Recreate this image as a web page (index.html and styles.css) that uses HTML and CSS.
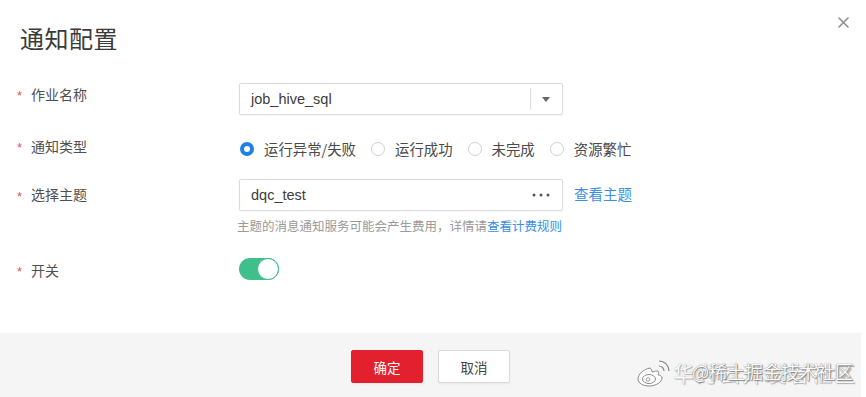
FILE: index.html
```html
<!DOCTYPE html>
<html lang="zh">
<head>
<meta charset="utf-8">
<title>通知配置</title>
<link rel="stylesheet" href="styles.css">
</head>
<body>
<div class="dialog">
  <div class="header">
    <h1 class="title">通知配置</h1>
    <button class="close" aria-label="关闭">
      <svg width="11" height="11" viewBox="0 0 11 11"><path d="M1 1L10 10M10 1L1 10" stroke="#8f8f8f" stroke-width="1.6" stroke-linecap="round"/></svg>
    </button>
  </div>

  <div class="form">
    <div class="row row-job">
      <div class="label label-up"><span class="star">*</span>作业名称</div>
      <div class="control">
        <div class="field select">
          <span class="value">job_hive_sql</span>
          <span class="divider"></span>
          <span class="caret"></span>
        </div>
      </div>
    </div>

    <div class="row row-type">
      <div class="label label-up-s"><span class="star">*</span>通知类型</div>
      <div class="control radios">
        <label class="radio"><span class="dot checked"></span>运行异常/失败</label>
        <label class="radio"><span class="dot"></span>运行成功</label>
        <label class="radio"><span class="dot"></span>未完成</label>
        <label class="radio"><span class="dot"></span>资源繁忙</label>
      </div>
    </div>

    <div class="row row-topic">
      <div class="label"><span class="star">*</span>选择主题</div>
      <div class="control topic">
        <div class="field input">
          <span class="value">dqc_test</span>
          <svg class="more" width="18" height="4" viewBox="0 0 18 4">
            <circle cx="2" cy="2" r="1.5" fill="#555"/>
            <circle cx="9" cy="2" r="1.5" fill="#555"/>
            <circle cx="16" cy="2" r="1.5" fill="#555"/>
          </svg>
        </div>
        <a class="link view">查看主题</a>
      </div>
    </div>
    <div class="help">主题的消息通知服务可能会产生费用，详情请<a class="link">查看计费规则</a></div>

    <div class="row row-switch">
      <div class="label label-down"><span class="star">*</span>开关</div>
      <div class="control">
        <span class="switch"><span class="knob"></span></span>
      </div>
    </div>
  </div>

  <div class="footer">
    <button class="btn primary">确定</button>
    <button class="btn">取消</button>
  </div>

  <div class="watermark">
    <svg class="weibo" width="36" height="28" viewBox="0 0 36 28">
      <path d="M14 9c-6 1-12 6-12 11 0 4 5 7 11 7 7 0 13-4 13-8 0-2-2-3-4-3 1-2 1-4-1-4-2 0-4 1-5 1 0-2-1-4-2-4z" fill="#fff" stroke="#8a8a8a" stroke-width="1"/>
      <ellipse cx="13" cy="20" rx="6.5" ry="4.5" fill="#fff" stroke="#8a8a8a" stroke-width="1"/>
      <circle cx="12" cy="20.5" r="1.8" fill="none" stroke="#8a8a8a" stroke-width="0.8"/>
      <path d="M23 7a5 5 0 0 1 5 5" fill="none" stroke="#8a8a8a" stroke-width="1.2"/>
      <path d="M23 2a10 10 0 0 1 10 10" fill="none" stroke="#8a8a8a" stroke-width="1.2"/>
    </svg>
    <span class="wm-text">
      <span class="wm-back">华为云开发者社区</span>
      <span class="wm-front">@稀土掘金技术社区</span>
    </span>
  </div>
</div>
</body>
</html>
```

FILE: styles.css
```css
* { box-sizing: border-box; }
html, body {
  margin: 0;
  padding: 0;
  background: #fff;
}
body {
  width: 866px;
  height: 397px;
  overflow: hidden;
  font-family: "Liberation Sans", "Noto Sans CJK SC", sans-serif;
  color: #333;
}
.dialog {
  position: relative;
  width: 866px;
  height: 397px;
  display: flex;
  flex-direction: column;
  background: #fff;
}
.header {
  display: flex;
  justify-content: space-between;
  align-items: flex-start;
  padding: 0 0 0 20px;
  height: 83px;
}
.title {
  margin: 24px 0 0 0;
  font-size: 24px;
  line-height: 32px;
  font-weight: 400;
  color: #3a3a3a;
  letter-spacing: 0.5px;
}
.close {
  margin: 16px 17px 0 0;
  padding: 0;
  width: 12px;
  height: 12px;
  border: 0;
  background: none;
  display: flex;
  align-items: center;
  justify-content: center;
}
.form {
  padding-left: 17px;
  flex: 1;
}
.row {
  display: flex;
  align-items: center;
}
.label {
  width: 222px;
  font-size: 14px;
  line-height: 20px;
  color: #505050;
  display: flex;
  align-items: center;
}
.label-up { margin-top: -9px; }
.label-up-s { margin-top: -5px; }
.label-down { margin-top: 3px; }
.star {
  color: #e9525c;
  font-size: 13px;
  width: 14px;
  line-height: 20px;
  padding-top: 3px;
}
.control {
  display: flex;
  align-items: center;
}
.field {
  width: 324px;
  height: 32px;
  border: 1px solid #dcdcdc;
  border-radius: 2px;
  display: flex;
  align-items: center;
  padding-left: 11px;
  background: #fff;
  box-shadow: 0 1px 2px rgba(0,0,0,0.04);
}
.value {
  flex: 1;
  font-size: 14.5px;
  color: #3c3c3c;
  line-height: 20px;
}
.divider {
  width: 1px;
  height: 22px;
  background: #dedede;
  margin-right: 11px;
}
.caret {
  width: 0;
  height: 0;
  border-left: 4px solid transparent;
  border-right: 4px solid transparent;
  border-top: 5px solid #666;
  margin-right: 12px;
}
.more {
  margin-right: 12px;
}
.row-type { margin-top: 24px; height: 20px; }
.radios { padding-left: 1px; }
.radio {
  display: flex;
  align-items: center;
  font-family: "Noto Sans CJK SC", sans-serif;
  font-size: 14.4px;
  line-height: 20px;
  color: #4a4a4a;
  margin-right: 15px;
}
.dot {
  width: 14px;
  height: 14px;
  border-radius: 50%;
  border: 1px solid #d0d0d0;
  background: #fff;
  margin-right: 10px;
}
.dot.checked {
  border: 4px solid #1f80ea;
}
.row-topic { margin-top: 20px; }
.topic .link { margin-left: 11px; }
.link {
  color: #3a8ee6;
  text-decoration: none;
  cursor: pointer;
}
.view {
  font-size: 14.5px;
  line-height: 20px;
}
.help {
  margin: 8px 0 0 220px;
  font-size: 12.5px;
  line-height: 16px;
  color: #9a9a9a;
}
.row-switch { margin-top: 21px; }
.switch {
  width: 40px;
  height: 22px;
  border-radius: 11px;
  background: #3fbf8c;
  display: flex;
  align-items: center;
  justify-content: flex-end;
  padding: 0;
}
.knob {
  width: 22px;
  height: 22px;
  border-radius: 50%;
  background: #fff;
  border: 1px solid #3fbf8c;
}
.footer {
  height: 64px;
  background: #f5f5f5;
  display: flex;
  justify-content: center;
  align-items: flex-start;
  gap: 15px;
  padding: 17px 0 0 0;
  margin-right: 5px;
}
.btn {
  width: 72px;
  height: 33px;
  border-radius: 2px;
  border: 1px solid #dadada;
  background: #fff;
  font-family: inherit;
  font-size: 13.5px;
  color: #444;
  box-shadow: 0 1px 2px rgba(0,0,0,0.06);
}
.btn.primary {
  background: #e3202d;
  border-color: #e3202d;
  color: #fff;
}
.watermark {
  position: absolute;
  left: 636px;
  top: 357px;
  display: flex;
  align-items: center;
}
.weibo { margin-top: 2px; }
.wm-text {
  position: relative;
  display: block;
  width: 190px;
  height: 28px;
  margin-left: 1px;
}
.wm-back, .wm-front {
  position: absolute;
  top: 0;
  white-space: nowrap;
  color: #fafafa;
  font-family: "Noto Sans CJK SC", sans-serif;
}
.wm-back {
  left: 0;
  font-size: 21px;
  line-height: 28px;
  letter-spacing: 2px;
  text-shadow: 0 0 1px #9a9a9a, 1px 1px 1px #b0b0b0;
}
.wm-front {
  left: 19px;
  font-size: 18px;
  line-height: 26px;
  text-shadow: 0 0 1px #6a6a6a, 1px 1px 1px #888;
}
```
